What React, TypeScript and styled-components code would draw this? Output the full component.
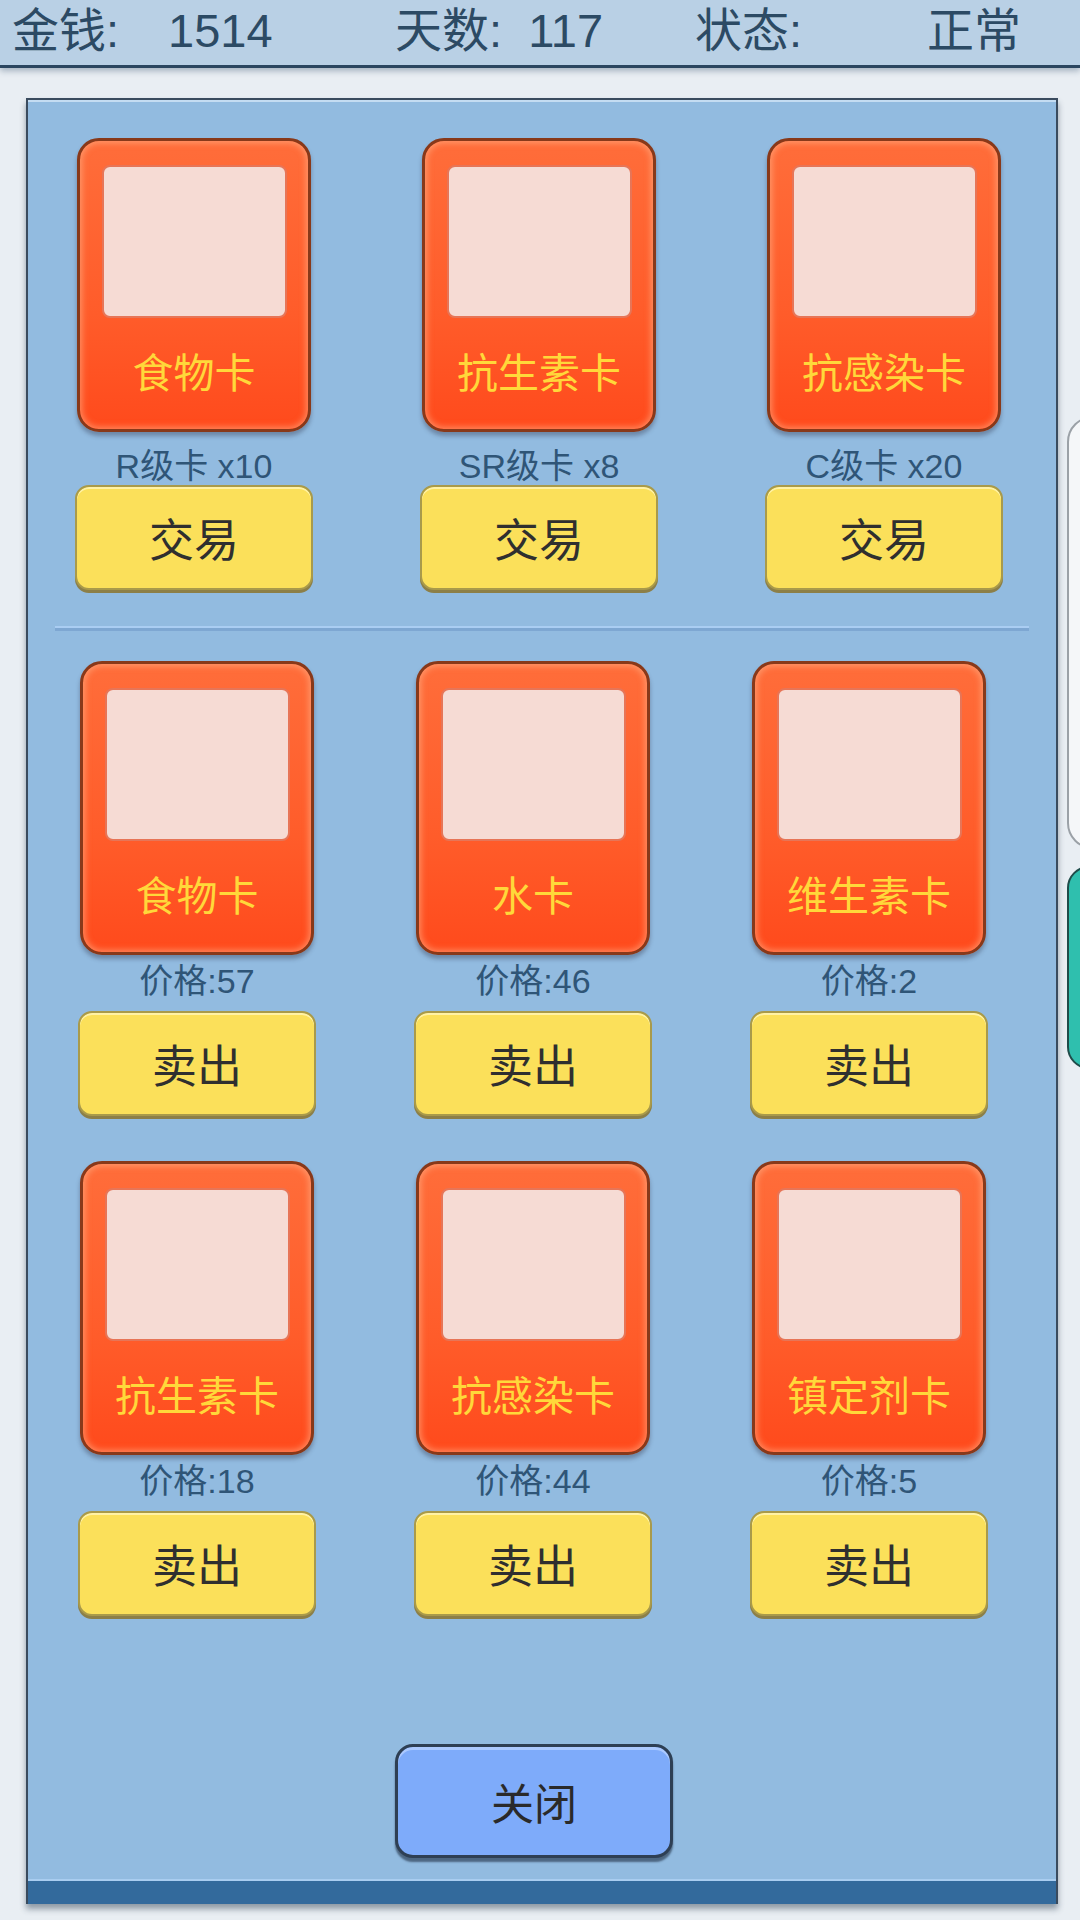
import React from "react";
import styled, { createGlobalStyle } from "styled-components";

const GlobalStyle = createGlobalStyle`
  html, body {
    margin: 0;
    padding: 0;
    background: #e9eef3;
    overflow: hidden;
  }
  body {
    font-family: "Liberation Sans", "Noto Sans CJK SC", sans-serif;
  }
  * {
    box-sizing: border-box;
  }
`;

const Page = styled.div`
  width: 1080px;
  height: 1920px;
  display: flex;
  flex-direction: column;
  background: #e9eef3;
  overflow: hidden;
`;

const TopBar = styled.div`
  height: 68px;
  flex: none;
  display: flex;
  align-items: center;
  padding: 0 0 3px 12px;
  background: #b9d0e5;
  border-bottom: 3px solid #2b4660;
  box-shadow: 0 3px 6px rgba(40, 70, 100, 0.35);
  position: relative;
  z-index: 1;
`;

const Stat = styled.div<{ $w?: number }>`
  width: ${({ $w }) => ($w ? `${$w}px` : "auto")};
  flex: none;
  font-family: "Liberation Sans", "Noto Sans CJK SC", sans-serif;
  font-size: 47px;
  line-height: 60px;
  color: #2c4a64;
  white-space: pre;
`;

const Main = styled.div`
  display: flex;
  align-items: flex-start;
  padding: 30px 0 0 26px;
`;

const Panel = styled.div`
  width: 1032px;
  flex: none;
  display: flex;
  flex-direction: column;
  background: #92bbe0;
  border: 2px solid #3a4b5e;
  border-bottom: none;
  box-shadow: 0 5px 6px rgba(30, 50, 70, 0.45), inset 0 2px 0 #c4dcf2;
`;

const Side = styled.div`
  margin-left: 9px;
  width: 60px;
  flex: none;
  display: flex;
  flex-direction: column;
`;

const WhiteTab = styled.div`
  margin-top: 318px;
  height: 433px;
  width: 60px;
  background: #f5f7f9;
  border: 2px solid #9ba1a7;
  border-radius: 26px 0 0 26px;
`;

const TealTab = styled.div`
  margin-top: 17px;
  height: 203px;
  width: 60px;
  background: #2fbfae;
  border: 2px solid #1f4c4a;
  border-radius: 22px 0 0 22px;
`;

const Grid = styled.div<{ $pad: number; $gap: number }>`
  display: grid;
  grid-template-columns: repeat(3, 238px);
  column-gap: ${({ $gap }) => $gap}px;
  row-gap: 45px;
  padding-left: ${({ $pad }) => $pad}px;
`;

const Item = styled.div`
  display: flex;
  flex-direction: column;
  align-items: center;
`;

const Card = styled.div`
  width: 234px;
  height: 294px;
  display: flex;
  flex-direction: column;
  align-items: center;
  padding-top: 24px;
  border: 3px solid #88391a;
  border-radius: 22px;
  background: linear-gradient(#ff6d3a, #ff5c2a 60%, #ff4a1c);
  box-shadow: 0 4px 4px rgba(40, 40, 60, 0.35),
    inset 0 0 6px 2px rgba(255, 190, 150, 0.55);
`;

const Picture = styled.div`
  width: 185px;
  height: 153px;
  background: #f6dbd4;
  border: 2px solid #e77557;
  border-radius: 8px;
`;

const CardTitle = styled.div`
  margin-top: 27px;
  font-family: "Noto Sans CJK SC", sans-serif;
  font-size: 41px;
  line-height: 50px;
  color: #ffd83a;
`;

const Label = styled.div<{ $top: number; $bottom: number }>`
  margin: ${({ $top, $bottom }) => `${$top}px 0 ${$bottom}px`};
  height: 38px;
  font-family: "Liberation Sans", "Noto Sans CJK SC", sans-serif;
  font-size: 34px;
  line-height: 38px;
  color: #2f5577;
  white-space: pre;
`;

const ActionButton = styled.div`
  width: 238px;
  height: 105px;
  display: flex;
  align-items: center;
  justify-content: center;
  background: #fbe05a;
  border: 2px solid #a99a4a;
  border-radius: 14px;
  box-shadow: 0 3px 0 #8c7f48, inset 0 2px 0 #fff2a6;
  font-family: "Noto Sans CJK SC", sans-serif;
  font-size: 45px;
  color: #2f2f2f;
`;

const Separator = styled.div`
  margin: 36px 27px 30px;
  height: 5px;
  background: linear-gradient(#aacdf2 0 40%, #7ea7d2 40%);
`;

const CloseRow = styled.div`
  display: flex;
  justify-content: center;
  padding-right: 16px;
  margin: 128px 0 21px;
`;

const CloseButton = styled.div`
  width: 278px;
  height: 114px;
  display: flex;
  align-items: center;
  justify-content: center;
  background: #7eabfa;
  border: 3px solid #2e3f54;
  border-radius: 18px;
  box-shadow: 0 4px 2px rgba(30, 45, 65, 0.6), inset 0 3px 0 #abc9ff;
  font-family: "Noto Sans CJK SC", sans-serif;
  font-size: 43px;
  color: #2a2a2a;
`;

const BottomBand = styled.div`
  height: 25px;
  background: #336a9c;
  border-top: 2px solid #a9cdf0;
`;

type Offer = { name: string; label: string };

const trades: Offer[] = [
  { name: "食物卡", label: "R级卡 x10" },
  { name: "抗生素卡", label: "SR级卡 x8" },
  { name: "抗感染卡", label: "C级卡 x20" },
];

const inventory: Offer[] = [
  { name: "食物卡", label: "价格:57" },
  { name: "水卡", label: "价格:46" },
  { name: "维生素卡", label: "价格:2" },
  { name: "抗生素卡", label: "价格:18" },
  { name: "抗感染卡", label: "价格:44" },
  { name: "镇定剂卡", label: "价格:5" },
];

function CardItem({
  offer,
  action,
  top,
  bottom,
}: {
  offer: Offer;
  action: string;
  top: number;
  bottom: number;
}) {
  return (
    <Item>
      <Card>
        <Picture />
        <CardTitle>{offer.name}</CardTitle>
      </Card>
      <Label $top={top} $bottom={bottom}>
        {offer.label}
      </Label>
      <ActionButton>{action}</ActionButton>
    </Item>
  );
}

export default function App() {
  return (
    <Page>
      <GlobalStyle />
      <TopBar>
        <Stat $w={156}>金钱:</Stat>
        <Stat $w={227}>1514</Stat>
        <Stat $w={300}>天数:  117</Stat>
        <Stat $w={232}>状态:</Stat>
        <Stat>正常</Stat>
      </TopBar>
      <Main>
        <Panel>
          <div style={{ height: 38 }} />
          <Grid $pad={47} $gap={107}>
            {trades.map((t) => (
              <CardItem key={t.label} offer={t} action="交易" top={15} bottom={0} />
            ))}
          </Grid>
          <Separator />
          <Grid $pad={50} $gap={98}>
            {inventory.map((t) => (
              <CardItem key={t.name + t.label} offer={t} action="卖出" top={7} bottom={11} />
            ))}
          </Grid>
          <CloseRow>
            <CloseButton>关闭</CloseButton>
          </CloseRow>
          <BottomBand />
        </Panel>
        <Side>
          <WhiteTab />
          <TealTab />
        </Side>
      </Main>
    </Page>
  );
}
